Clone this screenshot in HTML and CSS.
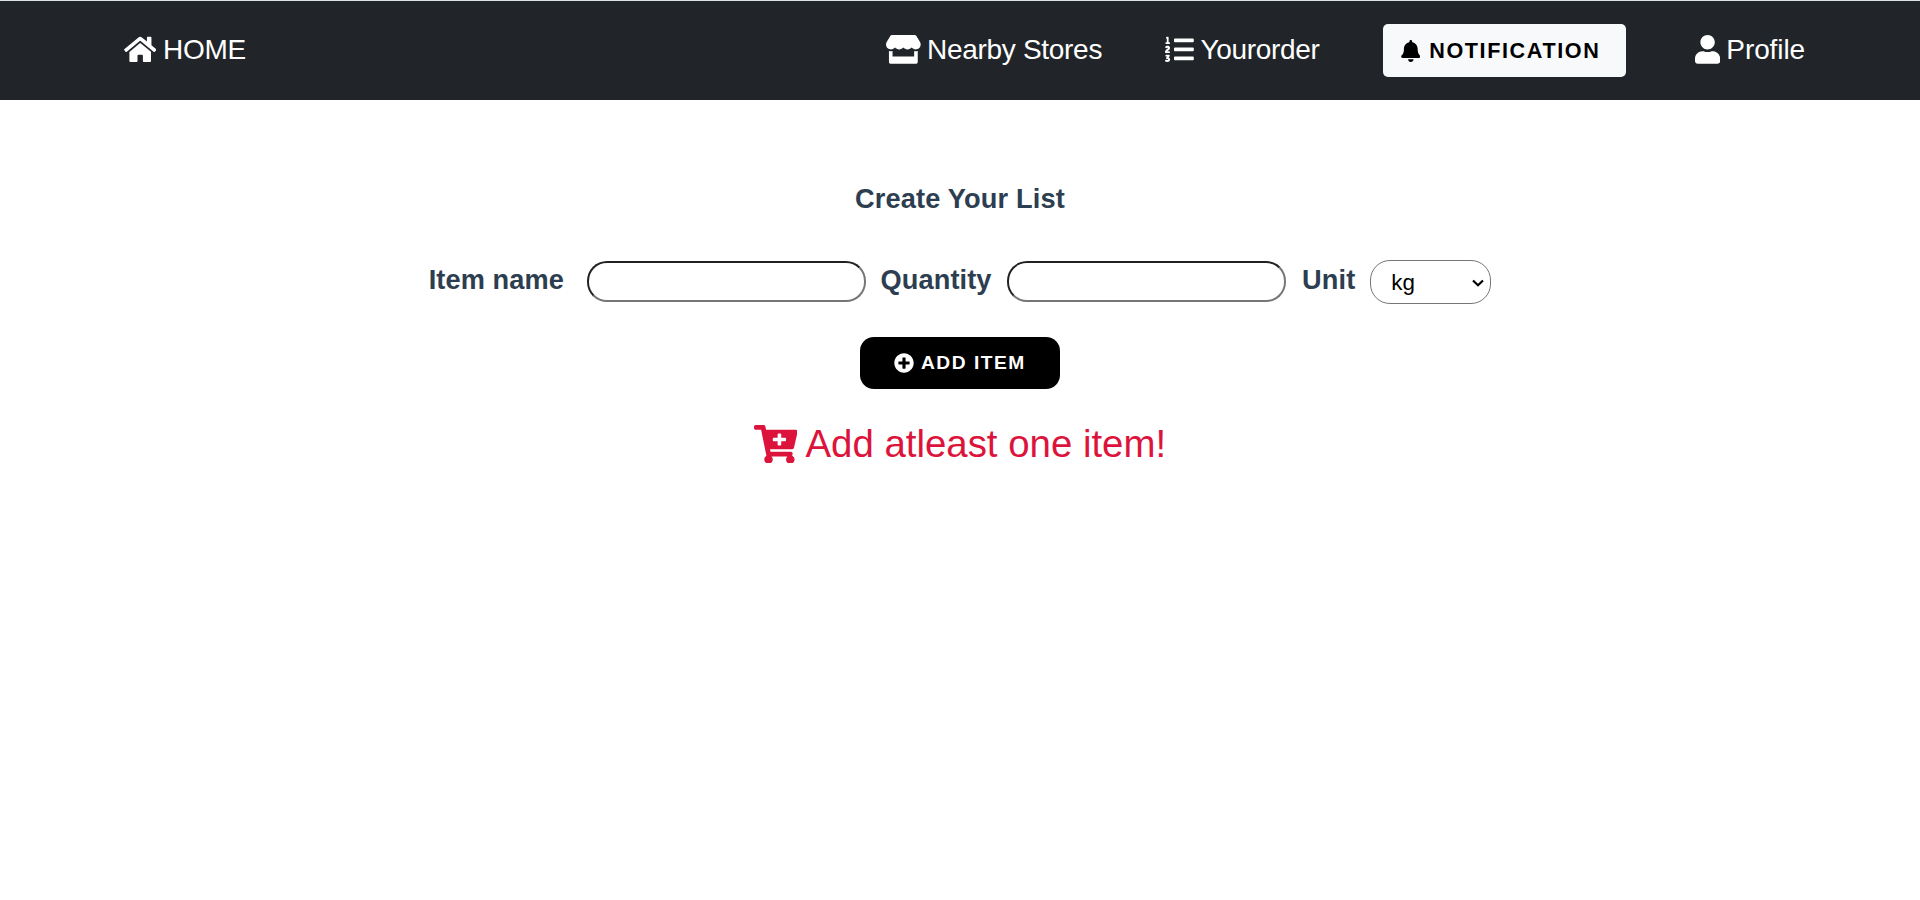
FILE: index.html
```html
<!DOCTYPE html>
<html lang="en">
<head>
<meta charset="utf-8">
<title>Create Your List</title>
<link rel="stylesheet" href="styles.css">
</head>
<body>
<nav class="navbar">
  <a class="nav-link home"><svg class="icon i-home" viewBox="0 0 576 512"><path d="M280.37 148.26L96 300.11V464a16 16 0 0 0 16 16l112.06-.29a16 16 0 0 0 15.92-16V368a16 16 0 0 1 16-16h64a16 16 0 0 1 16 16v95.64a16 16 0 0 0 16 16.05L464 480a16 16 0 0 0 16-16V300L295.67 148.26a12.19 12.19 0 0 0-15.3 0zM571.6 251.47L488 182.56V44.05a12 12 0 0 0-12-12h-56a12 12 0 0 0-12 12v72.61L318.47 43a48 48 0 0 0-61 0L4.34 251.47a12 12 0 0 0-1.6 16.9l25.5 31A12 12 0 0 0 45.15 301l235.22-193.74a12.19 12.19 0 0 1 15.3 0L530.9 301a12 12 0 0 0 16.9-1.6l25.5-31a12 12 0 0 0-1.7-16.93z"/></svg><span>HOME</span></a>
  <a class="nav-link stores"><svg class="icon i-store" viewBox="0 0 616 512"><path d="M602 118.600L537.100 15C531.300 5.700 521 0 510 0H106C95 0 84.700 5.700 78.900 15L14 118.600c-33.500 53.500-3.800 127.900 58.800 136.400 4.500.6 9.100.9 13.700.9 29.600 0 55.800-13 73.800-33.100 18 20.100 44.300 33.100 73.800 33.100 29.600 0 55.800-13 73.800-33.100 18 20.100 44.300 33.100 73.800 33.100 29.600 0 55.800-13 73.800-33.100 18.100 20.100 44.300 33.100 73.800 33.100 4.700 0 9.200-.3 13.700-.9 62.800-8.400 92.600-82.800 59-136.400zM529.500 288c-10 0-19.900-1.500-29.500-3.800V384H116v-99.800c-9.600 2.200-19.500 3.800-29.500 3.800-6 0-12.100-.4-18-1.200-5.600-.8-11.100-2.100-16.400-3.600V480c0 17.700 14.300 32 32 32h448c17.700 0 32-14.300 32-32V283.200c-5.400 1.600-10.800 2.900-16.400 3.600-6.100.8-12.100 1.200-18.200 1.200z"/></svg><span>Nearby Stores</span></a>
  <a class="nav-link order"><svg class="icon i-list" viewBox="0 0 512 512"><path d="M61.770 401l17.500-20.150a19.920 19.920 0 0 0 5.070-14.190v-3.310C84.340 356 80.500 352 73 352H16a8 8 0 0 0-8 8v16a8 8 0 0 0 8 8h22.830a157.410 157.410 0 0 0-11 12.310l-5.610 7c-4 5.070-5.250 10.130-2.800 14.880l1.050 1.930c3 5.760 6.290 7.880 12.250 7.880h4.730c10.330 0 15.940 2.440 15.940 9.090 0 4.720-4.200 8.220-14.360 8.220a41.540 41.540 0 0 1-15.470-3.120c-6.490-3.880-11.740-3.500-15.600 3.120l-5.590 9.310c-3.720 6.130-3.190 11.720 2.630 15.940 7.710 4.690 20.380 9.440 37 9.440 34.160 0 48.500-22.750 48.500-44.120-.03-14.380-9.120-29.760-28.730-34.880zM496 224H176a16 16 0 0 0-16 16v32a16 16 0 0 0 16 16h320a16 16 0 0 0 16-16v-32a16 16 0 0 0-16-16zm0-160H176a16 16 0 0 0-16 16v32a16 16 0 0 0 16 16h320a16 16 0 0 0 16-16V80a16 16 0 0 0-16-16zm0 320H176a16 16 0 0 0-16 16v32a16 16 0 0 0 16 16h320a16 16 0 0 0 16-16v-32a16 16 0 0 0-16-16zM16 160h64a8 8 0 0 0 8-8v-16a8 8 0 0 0-8-8H64V40a8 8 0 0 0-8-8H32a8 8 0 0 0-7.140 4.420l-8 16A8 8 0 0 0 24 64h8v64H16a8 8 0 0 0-8 8v16a8 8 0 0 0 8 8zm-3.910 160H80a8 8 0 0 0 8-8v-16a8 8 0 0 0-8-8H41.320c3.290-10.290 48.340-18.680 48.340-56.440 0-29.060-25-39.560-44.470-39.560-21.360 0-33.800 10-40.460 18.750-4.370 5.590-3 10.840 2.800 15.370l8.580 6.880c5.610 4.560 11 2.470 16.120-2.440a13.440 13.440 0 0 1 9.460-3.840c3.330 0 9.280 1.560 9.280 8.750C51 248.190 0 257.310 0 304.590v4C0 316 5.080 320 12.090 320z"/></svg><span>Yourorder</span></a>
  <button class="notify"><svg class="icon i-bell" viewBox="0 0 448 512"><path d="M224 512c35.320 0 63.970-28.650 63.970-64H160.030c0 35.350 28.650 64 63.970 64zm215.390-149.710c-19.320-20.760-55.470-51.990-55.470-154.290 0-77.700-54.480-139.900-127.940-155.160V32c0-17.670-14.320-32-31.980-32s-31.980 14.330-31.980 32v20.840C118.560 68.100 64.080 130.300 64.080 208c0 102.300-36.150 133.530-55.470 154.290-6 6.450-8.660 14.160-8.610 21.710.11 16.400 12.980 32 32.100 32h383.800c19.120 0 32-15.600 32.100-32 .05-7.550-2.610-15.270-8.610-21.710z"/></svg><span>NOTIFICATION</span></button>
  <a class="nav-link profile"><svg class="icon i-user" viewBox="0 0 448 512"><path d="M224 256c70.700 0 128-57.300 128-128S294.700 0 224 0 96 57.300 96 128s57.300 128 128 128zm89.600 32h-16.700c-22.200 10.200-46.900 16-72.900 16s-50.600-5.800-72.900-16h-16.700C60.200 288 0 348.200 0 422.400V464c0 26.500 21.500 48 48 48h352c26.500 0 48-21.500 48-48v-41.600c0-74.200-60.200-134.400-134.400-134.400z"/></svg><span>Profile</span></a>
</nav>
<main class="content">
  <h1 class="title">Create Your List</h1>
  <form class="item-form">
    <label class="label label-name" for="name">Item name</label><input class="field" id="name" type="text">
    <label class="label label-qty" for="qty">Quantity</label><input class="field" id="qty" type="text">
    <label class="label label-unit" for="unit">Unit</label>
    <div class="unit-wrap">
      <select class="unit" id="unit"><option>kg</option></select>
      <svg class="chevron" viewBox="0 0 12 8"><path d="M1 1.500l5 4.700 5-4.700"/></svg>
    </div>
  </form>
  <button class="add"><svg class="icon i-plus" viewBox="0 0 512 512"><path d="M256 8C119 8 8 119 8 256s111 248 248 248 248-111 248-248S393 8 256 8zm144 276c0 6.600-5.400 12-12 12h-92v92c0 6.600-5.400 12-12 12h-56c-6.600 0-12-5.400-12-12v-92h-92c-6.600 0-12-5.400-12-12v-56c0-6.600 5.400-12 12-12h92v-92c0-6.600 5.400-12 12-12h56c6.600 0 12 5.400 12 12v92h92c6.600 0 12 5.400 12 12v56z"/></svg><span>ADD ITEM</span></button>
  <p class="empty"><svg class="icon i-cart" viewBox="0 0 576 512"><path d="M504.717 320H211.572l6.545 32h268.418c15.401 0 26.816 14.301 23.403 29.319l-5.517 24.276C523.112 414.668 536 433.828 536 456c0 31.202-25.519 56.444-56.824 55.994-29.823-.429-54.350-24.631-55.155-54.447-.440-16.287 6.085-31.049 16.803-41.548H231.176C241.553 426.165 248 440.326 248 456c0 31.813-26.528 57.431-58.670 55.938-28.540-1.325-51.751-24.385-53.251-52.917-1.158-22.034 10.436-41.455 28.051-51.586L93.883 64H24C10.745 64 0 53.255 0 40V24C0 10.745 10.745 0 24 0h102.529c11.401 0 21.228 8.021 23.513 19.190L159.208 64H551.990c15.401 0 26.816 14.301 23.403 29.319l-47.273 208C525.637 312.246 515.923 320 504.717 320zM408 168h-48v-40c0-8.837-7.163-16-16-16h-16c-8.837 0-16 7.163-16 16v40h-48c-8.837 0-16 7.163-16 16v16c0 8.837 7.163 16 16 16h48v40c0 8.837 7.163 16 16 16h16c8.837 0 16-7.163 16-16v-40h48c8.837 0 16-7.163 16-16v-16c0-8.837-7.163-16-16-16z"/></svg><span>Add atleast one item!</span></p>
</main>
</body>
</html>
```
FILE: styles.css
```css
* { box-sizing: border-box; }
body { margin: 0; background: #fff; font-family: "Liberation Sans", Arial, sans-serif; }
.icon { display: block; flex: none; fill: currentColor; }

.navbar { display: flex; align-items: center; height: 100px; border-top: 1px solid #dae1e4; background: #212529; color: #fff; padding: 0 115px 0 124px; }
.nav-link { display: flex; align-items: center; margin-top: -2px; font-size: 28px; letter-spacing: -0.3px; white-space: nowrap; line-height: 34px; }
.i-home { width: 32.4px; height: 28.8px; margin-right: 6.600px; }
.home { margin-right: auto; }
.i-store { width: 34.700px; height: 28.8px; margin-right: 6.500px; }
.stores { margin-right: 63px; }
.i-list { width: 28.8px; height: 28.8px; margin-right: 6.500px; }
.order { margin-right: 63px; }
.i-user { width: 25.200px; height: 28.8px; margin-right: 6.500px; }
.profile { letter-spacing: -0.1px; }
.notify { display: flex; align-items: center; width: 243px; height: 53px; margin: 0 69px 0 0; padding: 0 0 0 18px; border: 0; border-radius: 5px; background: #f8f9fa; color: #000; font: bold 21.6px "Liberation Sans", Arial, sans-serif; letter-spacing: 1.6px; }
.i-bell { width: 19.600px; height: 22px; margin-right: 9px; }

.content { display: flex; flex-direction: column; align-items: center; }
.title { margin: 83px 0 0; font-size: 27.2px; line-height: 32px; letter-spacing: 0.15px; color: #2c3e50; }
.item-form { display: flex; align-items: center; margin-top: 45px; height: 44px; font-size: 27.2px; color: #2c3e50; }
.label { font-weight: bold; line-height: 32px; letter-spacing: 0.1px; margin-top: -4px; }
.label-name { margin-right: 22.5px; }
.label-qty { margin-left: 15px; margin-right: 15.5px; }
.label-unit { margin-left: 16px; margin-right: 15px; }
.field { width: 279px; height: 41px; margin: -1px 0 0; border: 2px inset #767676; border-radius: 20px; background: #fff; padding: 0 16px; font-size: 22px; }
.unit-wrap { position: relative; width: 121px; height: 44px; }
.unit { appearance: none; display: block; width: 100%; height: 100%; margin: 0; padding: 0 20px; border: 1px solid #767676; border-radius: 20px; background: #fff; color: #000; font: 22.4px "Liberation Sans", Arial, sans-serif; }
.chevron { position: absolute; right: 7px; top: 19px; width: 12px; height: 8px; fill: none; stroke: #000; stroke-width: 2.2; pointer-events: none; }
.add { display: flex; align-items: center; width: 200px; height: 52px; margin: 33px 0 0; padding: 0 0 0 34px; border: 0; border-radius: 14px; background: #000; color: #fff; font: bold 19.200px "Liberation Sans", Arial, sans-serif; letter-spacing: 1.5px; }
.i-plus { width: 20px; height: 20px; margin-right: 7px; }
.empty { display: flex; align-items: center; margin: 33px 0 0; font-size: 38.4px; line-height: 44px; color: #dc143c; }
.i-cart { width: 43.600px; height: 38.800px; margin-right: 8px; }
```
